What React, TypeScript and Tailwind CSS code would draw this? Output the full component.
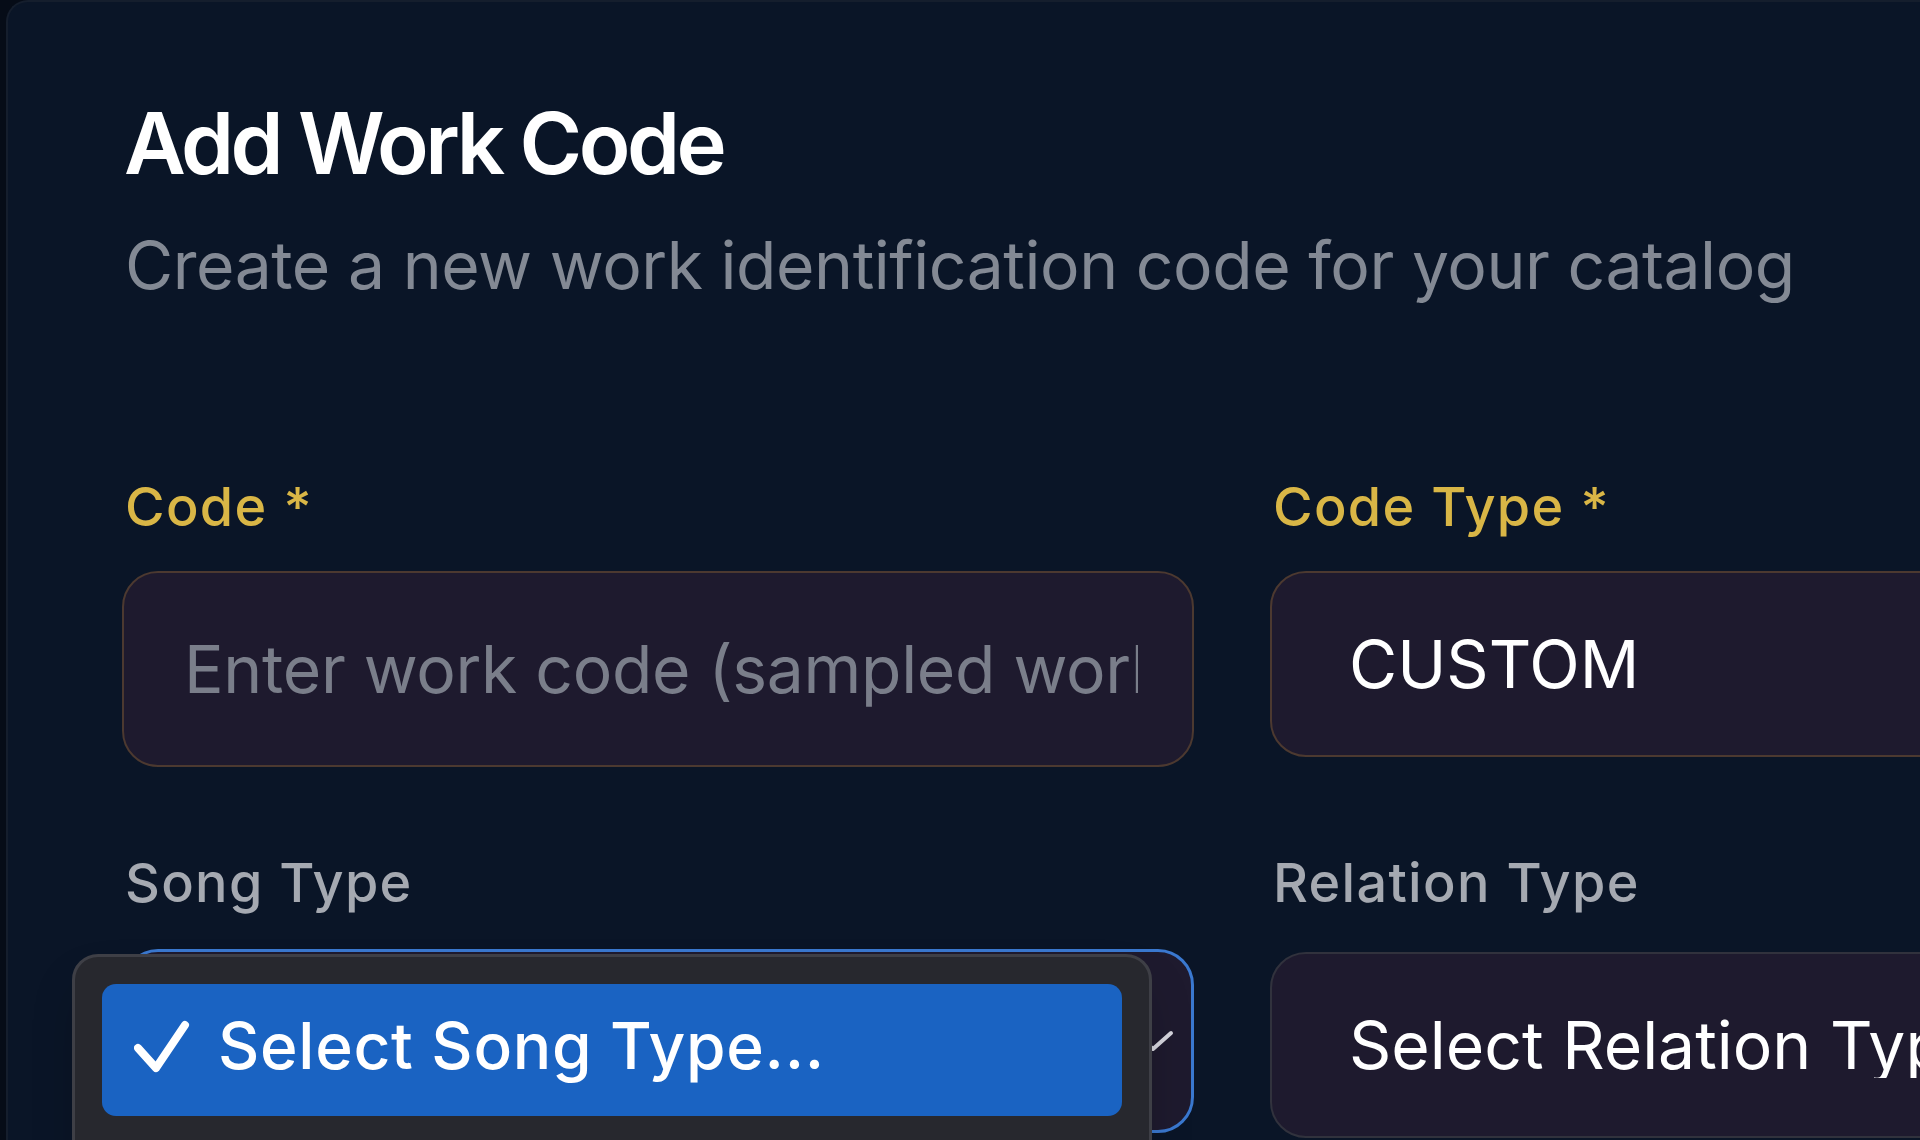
const fieldBase =
  "w-full appearance-none rounded-[36px] bg-[#1e1a2e] text-[66px] leading-none text-white outline-none"

function Label({ text, required }: { text: string; required?: boolean }) {
  return (
    <label
      className={
        required
          ? "block pl-[3px] text-[54px] leading-none font-medium tracking-[1.3px] text-[#d9b646]"
          : "block pl-[3px] text-[54px] leading-none font-medium tracking-[1.3px] text-[#a5a9b1]"
      }
    >
      {text}
      {required && <span className="ml-[16px]">*</span>}
    </label>
  )
}

function CheckMark() {
  return (
    <svg width="56" height="56" viewBox="0 0 56 56" fill="none" className="shrink-0">
      <path
        d="M4 30 L22 50 L51 7"
        stroke="white"
        strokeWidth="8"
        strokeLinecap="round"
        strokeLinejoin="round"
      />
    </svg>
  )
}

export default function App() {
  return (
    <div
      className="h-[1140px] w-full overflow-hidden bg-[#060c17] pl-[6px]"
      style={{ fontFamily: "Inter, 'Noto Sans', sans-serif" }}
    >
      <div className="h-full w-[2600px] rounded-tl-[22px] border-l-2 border-t-2 border-[#151e2d] bg-[#0a1527] pl-[114px] pt-[99px]">
        {/* Header */}
        <h1 className="pl-[2px] text-[85px] leading-none font-semibold tracking-[-3.5px] text-white">
          Add Work Code
        </h1>
        <p className="mt-[46px] pl-[3px] text-[66px] leading-none tracking-[-0.45px] text-[#838994]">
          Create a new work identification code for your catalog
        </p>

        {/* Form */}
        <div className="mt-[182px] grid grid-cols-[1072px_1072px] items-start gap-x-[76px] gap-y-[89px]">
          <div>
            <Label text="Code" required />
            <input
              className={`${fieldBase} mt-[37px] h-[196px] border-2 border-[#4c3930] pl-[60px] pr-[54px] tracking-[-0.3px] placeholder:text-[#7a7e8a]`}
              placeholder="Enter work code (sampled work)"
            />
          </div>
          <div>
            <Label text="Code Type" required />
            <select
              defaultValue="CUSTOM"
              className={`${fieldBase} mt-[37px] h-[186px] border-2 border-[#4c3930] pl-[77px]`}
            >
              <option value="CUSTOM">CUSTOM</option>
              <option value="ISWC">ISWC</option>
            </select>
          </div>

          <div>
            <Label text="Song Type" />
            <div className="relative mt-[39px]">
              <div className={`${fieldBase} h-[184px] border-[3px] border-[#3a78cf]`} />
              <svg
                width="44"
                height="24"
                viewBox="0 0 44 24"
                fill="none"
                className="absolute right-[19px] top-[80px]"
              >
                <path
                  d="M4 4 L22 20 L40 4"
                  stroke="#d6d6de"
                  strokeWidth="4"
                  strokeLinecap="round"
                  strokeLinejoin="round"
                />
              </svg>

              {/* Open native menu */}
              <div className="absolute left-[-50px] top-[5px] h-[260px] w-[1080px] rounded-[26px] border-[3px] border-[#3e3f46] bg-[#27282e] px-[27px] pt-[27px] shadow-2xl">
                <div className="flex h-[132px] items-center gap-[28px] rounded-[14px] bg-[#1a63c2] pb-[8px] pl-[32px]">
                  <CheckMark />
                  <span className="text-[64px] leading-none font-medium tracking-[0.7px] text-white">
                    Select Song Type...
                  </span>
                </div>
              </div>
            </div>
          </div>
          <div>
            <Label text="Relation Type" />
            <select
              defaultValue=""
              className={`${fieldBase} mt-[42px] h-[186px] border-2 border-[#31323d] pl-[77px]`}
            >
              <option value="">Select Relation Type...</option>
              <option value="sample">Sample</option>
            </select>
          </div>
        </div>
      </div>
    </div>
  )
}
